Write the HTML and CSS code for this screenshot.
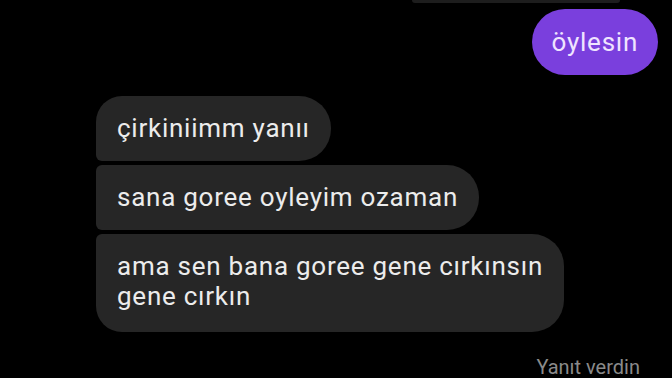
FILE: index.html
```html
<!DOCTYPE html>
<html>
<head>
    <meta charset="utf-8">
    <title>Sohbet</title>
    <link rel="stylesheet" href="styles.css">
</head>
<body>
    <div class="chat">
        <div class="peek"></div>
        <div class="bubble sent">öylesin</div>
        <div class="group">
            <div class="bubble recv first">çirkiniimm yanıı</div>
            <div class="bubble recv">sana goree oyleyim ozaman</div>
            <div class="bubble recv last">ama sen bana goree gene cırkınsın<br>gene cırkın</div>
        </div>
        <div class="seen">Yanıt verdin</div>
    </div>
</body>
</html>
```

FILE: styles.css
```css
html, body
{
    margin: 0;
    background-color: #000;
    height: 100%;
    overflow: hidden;
}
.chat
{
    display: flex;
    flex-direction: column;
    padding: 0 14px 0 96px;
    font-family: Roboto, "Noto Sans", sans-serif;
}
.peek
{
    align-self: flex-end;
    width: 208px;
    height: 3px;
    margin-right: 38px;
    background-color: #1d1d1d;
    border-radius: 0 0 20px 20px;
}
.bubble
{
    font-size: 26px;
    line-height: 30px;
    letter-spacing: 0.75px;
    padding: 17px 21px 18px 21px;
}
.sent
{
    align-self: flex-end;
    margin-top: 6px;
    padding: 18px 20px 18px 20px;
    background-color: #7a3fdd;
    color: #efe4ff;
    border-radius: 33px;
}
.group
{
    display: flex;
    flex-direction: column;
    align-items: flex-start;
    gap: 4px;
    margin-top: 21px;
}
.recv
{
    background-color: #262626;
    color: #ececec;
    border-radius: 6px 32px 32px 6px;
}
.recv.first
{
    border-top-left-radius: 26px;
}
.recv.last
{
    padding-bottom: 21px;
    border-bottom-left-radius: 26px;
}
.seen
{
    align-self: flex-end;
    margin: 23px 18px 0 0;
    font-size: 20px;
    color: #8a8a8a;
}
```
